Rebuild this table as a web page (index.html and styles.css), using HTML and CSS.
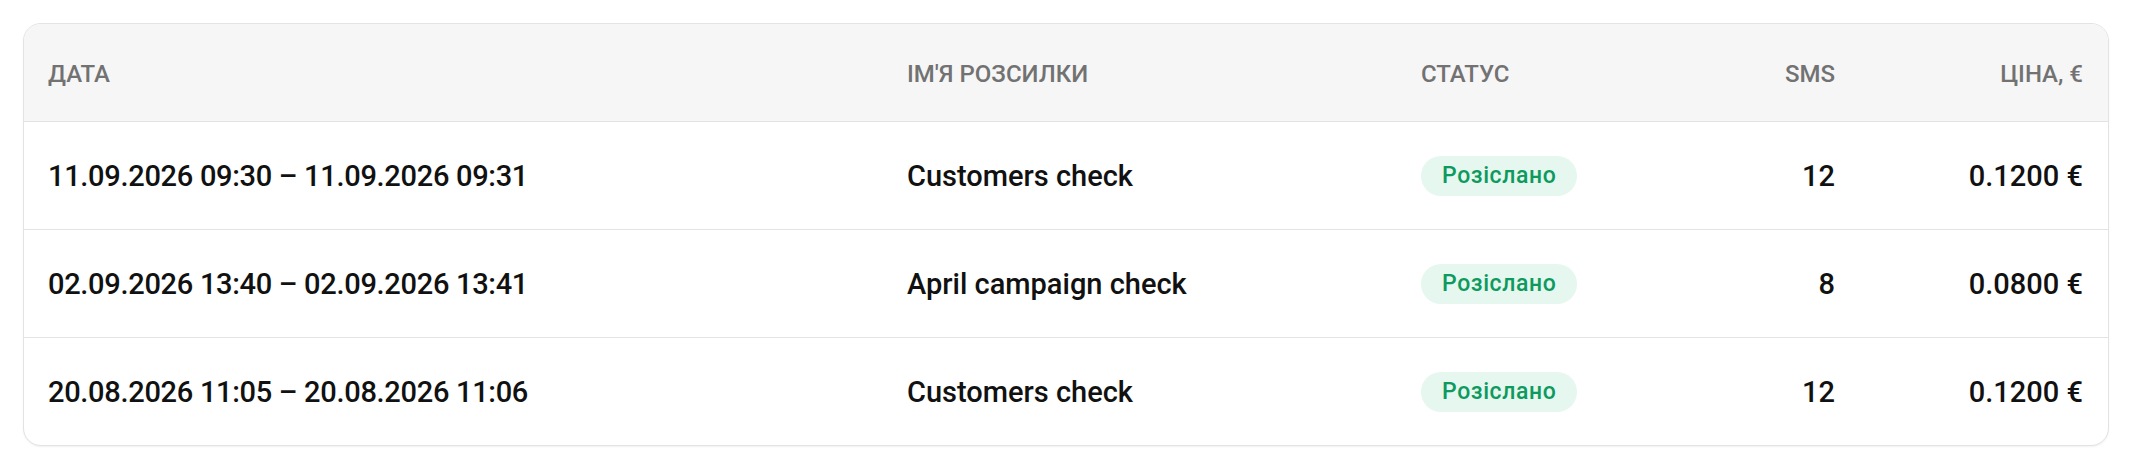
FILE: index.html
```html
<!DOCTYPE html>
<html lang="uk">
<head>
<meta charset="utf-8">
<title>Розсилки</title>
<link rel="stylesheet" href="styles.css">
</head>
<body>
<div class="page">
  <div class="card">
    <div class="row head">
      <div class="cell">Дата</div>
      <div class="cell">Ім'я розсилки</div>
      <div class="cell">Статус</div>
      <div class="cell num">SMS</div>
      <div class="cell num">Ціна, €</div>
    </div>
    <div class="row">
      <div class="cell date">11.09.2026 09:30 – 11.09.2026 09:31</div>
      <div class="cell">Customers check</div>
      <div class="cell"><span class="badge">Розіслано</span></div>
      <div class="cell num">12</div>
      <div class="cell num">0.1200 €</div>
    </div>
    <div class="row">
      <div class="cell date">02.09.2026 13:40 – 02.09.2026 13:41</div>
      <div class="cell">April campaign check</div>
      <div class="cell"><span class="badge">Розіслано</span></div>
      <div class="cell num">8</div>
      <div class="cell num">0.0800 €</div>
    </div>
    <div class="row">
      <div class="cell date">20.08.2026 11:05 – 20.08.2026 11:06</div>
      <div class="cell">Customers check</div>
      <div class="cell"><span class="badge">Розіслано</span></div>
      <div class="cell num">12</div>
      <div class="cell num">0.1200 €</div>
    </div>
  </div>
</div>
</body>
</html>
```

FILE: styles.css
```css
* { box-sizing: border-box; }
html, body { margin: 0; padding: 0; background: #ffffff; }
body {
  font-family: Roboto, "Liberation Sans", Arial, sans-serif;
  color: #111111;
}
.page { padding: 23px; }
.card {
  border: 1px solid #e3e3e3;
  border-radius: 18px;
  overflow: hidden;
  background: #ffffff;
  box-shadow: 0 1px 2px rgba(0, 0, 0, 0.06);
}
.row {
  display: grid;
  grid-template-columns: 859px 514px 260px 154px 248px;
  align-items: center;
  height: 108px;
  padding: 0 24px;
  font-size: 29px;
  font-weight: 500;
  line-height: 40px;
  border-top: 1px solid #e3e3e3;
}
.row.head {
  height: 97px;
  border-top: none;
  background: #f6f6f6;
  font-size: 24px;
  font-weight: 500;
  line-height: 34px;
  color: #727272;
  text-transform: uppercase;
  padding: 3px 24px 0 24px;
}
.cell {
  white-space: nowrap;
  display: flex;
  align-items: center;
}
.date { letter-spacing: -0.3px; }
.num { justify-content: flex-end; }
.badge {
  display: inline-flex;
  align-items: center;
  height: 40px;
  padding: 0 21px;
  border-radius: 20px;
  background: #e5f7ef;
  color: #0e9a5e;
  font-size: 23px;
  font-weight: 500;
  letter-spacing: 0.6px;
}
```
